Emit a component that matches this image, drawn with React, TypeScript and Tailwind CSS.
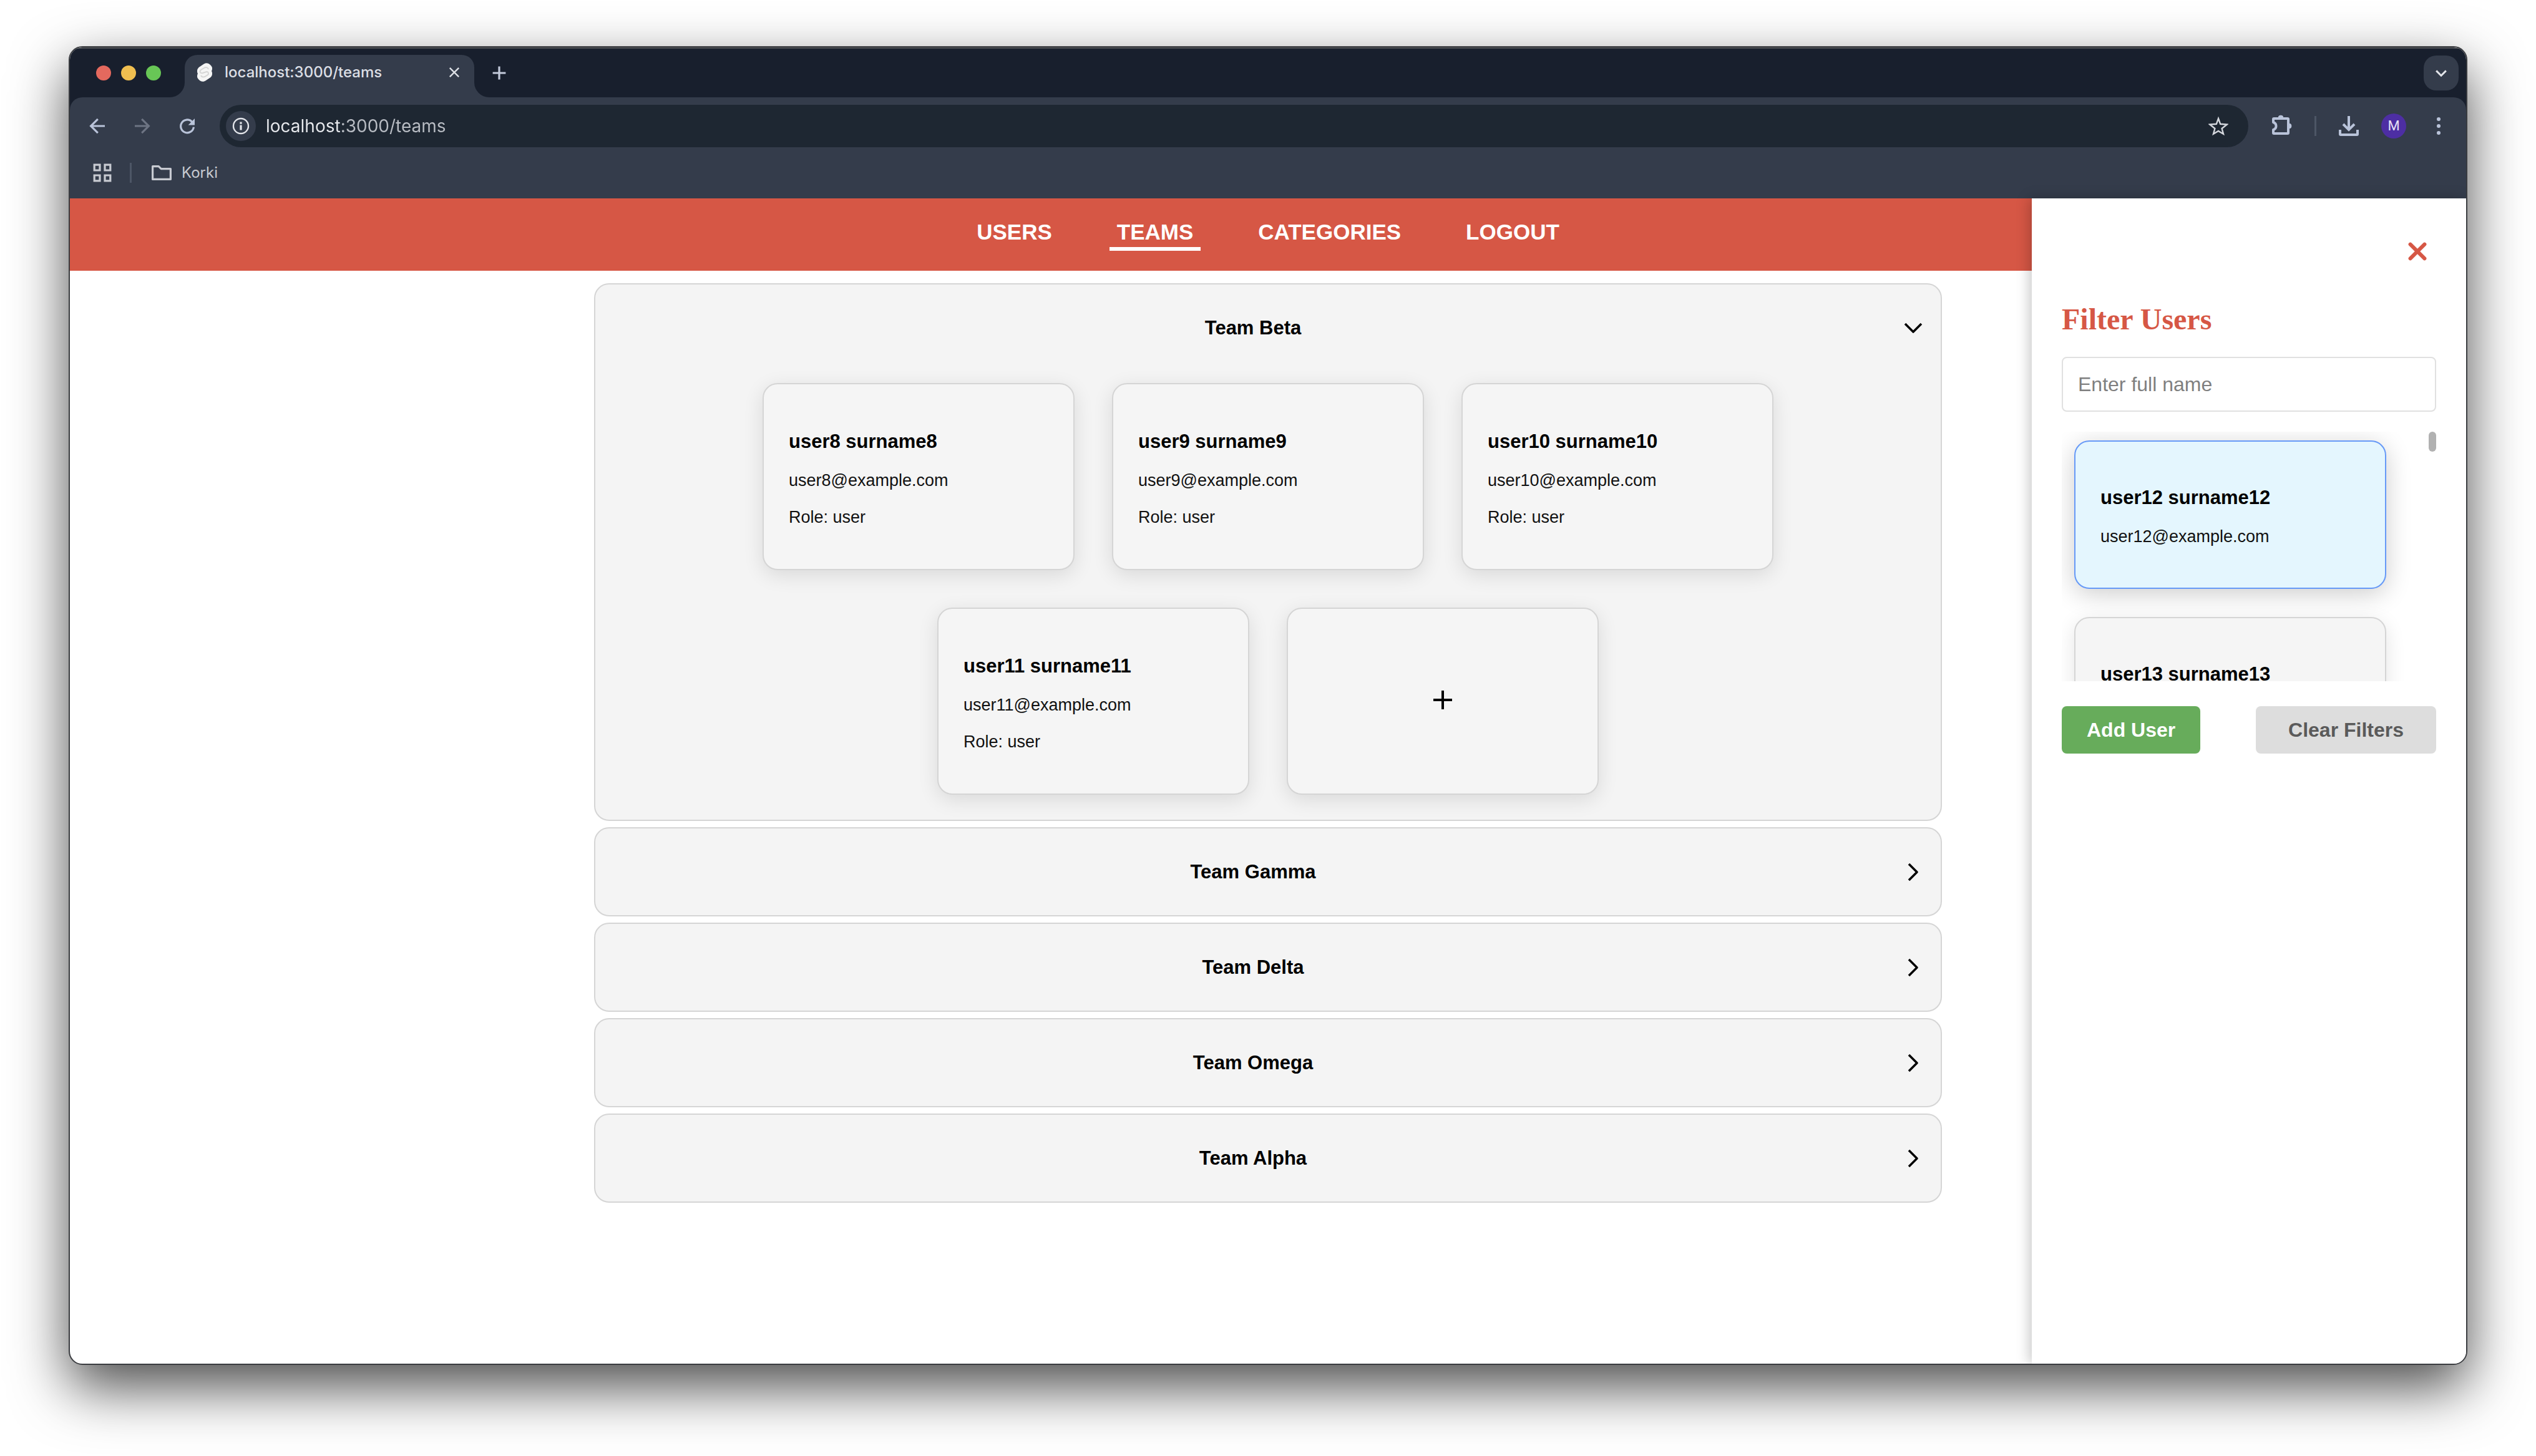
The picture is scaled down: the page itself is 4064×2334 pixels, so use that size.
import React from 'react';

type IconProps = { className?: string };

const Chevron = ({ open }: { open: boolean }) => (
  <svg className="size-12 shrink-0" viewBox="0 0 24 24" fill="none" stroke="currentColor" strokeWidth="1.8" strokeLinejoin="round" aria-hidden="true">
    {open ? <path d="m5.5 8.5 6.5 6.5 6.5-6.5" /> : <path d="m8.5 18.5 6.5-6.5-6.5-6.5" />}
  </svg>
);

const Stroke = ({ className, children }: IconProps & { children: React.ReactNode }) => (
  <svg className={className} viewBox="0 0 40 40" fill="none" stroke="currentColor" strokeWidth="3" aria-hidden="true">
    {children}
  </svg>
);

const SvelteMark = () => (
  <svg className="h-8 w-7 shrink-0" viewBox="0 0 28 32" aria-hidden="true">
    <path d="M24 5c-3-4-8-5-12-2L6 7c-2 1-4 4-4 6 0 2 0 4 1 5-1 2-1 3-1 5 0 1 1 3 2 4 3 4 8 5 12 2l6-4c2-1 4-4 4-6 0-2 0-4-1-5 1-2 1-3 1-5 0-1-1-3-2-4z" fill="#f5f5f5" />
    <path d="M20 11c-1-3-4-4-7-2l-5 3c-3 3-1 6 3 5l6-2c3 0 4 3 2 5l-5 3c-3 1-5 0-6-2" fill="none" stroke="#d6d6d6" strokeWidth="2" />
  </svg>
);

function TabStrip() {
  return (
    <div className="flex h-[78px] items-end bg-[#181f2d] pr-3 pl-[42px]">
      <div className="flex items-center gap-4 self-center" aria-hidden="true">
        <span className="size-6 rounded-full bg-[#e4695e]" />
        <span className="size-6 rounded-full bg-[#f0bf50]" />
        <span className="size-6 rounded-full bg-[#68c656]" />
      </div>
      <svg className="ml-[14px] h-6 w-6" viewBox="0 0 24 24" aria-hidden="true">
        <path d="M24 0v24H0A24 24 0 0 0 24 0z" fill="#343c4b" />
      </svg>
      <div className="flex h-[68px] w-[464px] items-center rounded-t-[20px] bg-[#343c4b] pr-5 pb-3 pl-[18px]">
        <SvelteMark />
        <span className="ml-[18px] flex-1 text-[24px] leading-8 font-medium text-[#dcdfe5]">localhost:3000/teams</span>
        <button type="button" aria-label="Close tab" className="text-[#dcdfe5]">
          <Stroke className="size-6"><path d="M8 8l24 24M32 8L8 32" strokeWidth="4" /></Stroke>
        </button>
      </div>
      <svg className="h-6 w-6" viewBox="0 0 24 24" aria-hidden="true">
        <path d="M0 0v24h24A24 24 0 0 1 0 0z" fill="#343c4b" />
      </svg>
      <button type="button" aria-label="New tab" className="self-center text-[#c3cadb]">
        <Stroke className="size-8"><path d="M20 7v26M7 20h26" strokeWidth="4" /></Stroke>
      </button>
      <button type="button" aria-label="Search tabs" className="ml-auto flex size-14 items-center justify-center self-center rounded-[20px] bg-[#343c4b] text-[#e3e5ea]">
        <Stroke className="size-6"><path d="M7 14l13 13 13-13" strokeWidth="5" /></Stroke>
      </button>
    </div>
  );
}

function Toolbar() {
  return (
    <div className="bg-[#181f2d]">
      <div className="flex h-[92px] items-center rounded-t-[20px] bg-[#343c4b] px-6 text-[#b9c3d9]">
        <button type="button" aria-label="Back" className="p-1">
          <Stroke className="size-8"><path d="M35 20H7M21 6L7 20l14 14" strokeWidth="4" /></Stroke>
        </button>
        <button type="button" aria-label="Forward" className="ml-8 p-1 text-[#6d7483]">
          <Stroke className="size-8"><path d="M5 20h28M19 6l14 14-14 14" strokeWidth="4" /></Stroke>
        </button>
        <button type="button" aria-label="Reload" className="ml-8 p-1">
          <Stroke className="size-8">
            <path d="M33 22a13 13 0 1 1-4-11l3 3" strokeWidth="4" />
            <path d="M35 5v13H22z" fill="currentColor" stroke="none" />
          </Stroke>
        </button>
        <div className="ml-8 flex h-[68px] flex-1 items-center rounded-full bg-[#1e2732] pr-8 pl-[10px]">
          <button type="button" aria-label="Site information" className="flex size-12 items-center justify-center rounded-full bg-[#343c4b] text-[#e3e5ea]">
            <Stroke className="size-8"><circle cx="20" cy="20" r="15" strokeWidth="3" /><path d="M20 18v10M20 12v4" strokeWidth="4" /></Stroke>
          </button>
          <input
            type="text"
            aria-label="Address"
            defaultValue="localhost:3000/teams"
            className="ml-4 h-9 min-w-0 flex-1 bg-[linear-gradient(90deg,#e8eaee_122px,#b9bdc4_122px)] bg-clip-text text-[28px] leading-9 text-transparent outline-none"
          />
          <button type="button" aria-label="Bookmark this page" className="text-[#d5d8de]">
            <Stroke className="size-8"><path d="M20 5l4 11 13 1-10 8 3 11-10-6-10 6 3-11-10-8 13-1z" strokeWidth="3" /></Stroke>
          </button>
        </div>
        <button type="button" aria-label="Extensions" className="ml-[34px]">
          <Stroke className="size-10">
            <path d="M7 8H29a1 1 0 0 1 1 1V31a1 1 0 0 1-1 1H7a1 1 0 0 1-1-1V26c6-2 6-10 0-12V9a1 1 0 0 1 1-1z" strokeWidth="4" strokeLinejoin="round" />
            <path d="M14 7a4 4 0 0 1 8 0zM31 16a4 4 0 0 1 0 8z" fill="currentColor" strokeWidth="1" />
          </Stroke>
        </button>
        <span className="ml-8 h-8 w-[3px] bg-[#4d5666]" />
        <button type="button" aria-label="Downloads" className="ml-8">
          <Stroke className="size-10"><path d="M20 4v22M11 17l9 9 9-9M6 26v7a1 1 0 0 0 1 1h26a1 1 0 0 0 1-1v-7" strokeWidth="4" /></Stroke>
        </button>
        <button type="button" aria-label="Profile" className="ml-8 flex size-10 items-center justify-center rounded-full bg-[#4d2ea3] font-['Roboto'] text-[22px] leading-6 text-[#e6e1f5]">M</button>
        <button type="button" aria-label="Menu" className="ml-8">
          <svg className="size-10" viewBox="0 0 40 40" fill="currentColor" aria-hidden="true"><circle cx="20" cy="9" r="3" /><circle cx="20" cy="20" r="3" /><circle cx="20" cy="31" r="3" /></svg>
        </button>
      </div>
      <div className="flex h-[70px] items-center bg-[#343c4b] pb-3 pl-9 text-[#c7cad1]">
        <button type="button" aria-label="Apps">
          <Stroke className="size-8"><path d="M4 4h11v11H4zM25 4h11v11H25zM4 25h11v11H4zM25 25h11v11H25z" strokeWidth="4" /></Stroke>
        </button>
        <span className="ml-7 h-8 w-[3px] bg-[#4d5666]" />
        <a href="#korki" className="ml-8 flex items-center gap-4 text-[24px] leading-8">
          <Stroke className="size-8"><path d="M2 7h12l5 5h19v21H2z" strokeWidth="4" strokeLinejoin="round" /></Stroke>
          Korki
        </a>
      </div>
    </div>
  );
}

const links = ['USERS', 'TEAMS', 'CATEGORIES', 'LOGOUT'];

function NavBar() {
  return (
    <nav className="flex h-[116px] items-center justify-center gap-20 bg-[#d65745] text-[35px] leading-[41px] font-bold text-white">
      {links.map((l) => (
        <a
          key={l}
          href={`#${l.toLowerCase()}`}
          aria-current={l === 'TEAMS' ? 'page' : undefined}
          className="border-b-[6px] border-transparent px-3 pb-1 aria-[current=page]:border-white"
        >
          {l}
        </a>
      ))}
    </nav>
  );
}

function UserCard({ n, email = true, role, selected }: { n: number; email?: boolean; role?: string; selected?: boolean }) {
  return (
    <button
      type="button"
      aria-pressed={selected}
      className={
        'flex w-[500px] shrink-0 flex-col items-start rounded-3xl border-2 px-10 text-left ' +
        (role ? 'pt-[74px] pb-[67px] ' : 'pt-[72px] pb-[66px] ') +
        (selected
          ? 'border-[#6699f7] bg-[#e4f6fe] shadow-[0_8px_40px_rgba(0,0,0,0.2)]'
          : 'border-[#d5d5d5] bg-[#f5f5f5] shadow-[0_8px_32px_rgba(0,0,0,0.11)]')
      }
    >
      <h3 className="text-[31px] leading-9 font-bold">{`user${n} surname${n}`}</h3>
      {email && <p className="mt-7 text-[27px] leading-8 text-[#111111]">{`user${n}@example.com`}</p>}
      {role && <p className="mt-[27px] text-[27px] leading-8 text-[#111111]">Role: {role}</p>}
    </button>
  );
}

function TeamPanel({ name, users }: { name: string; users?: number[] }) {
  return (
    <section className="rounded-3xl border-2 border-[#d5d5d5] bg-[#f4f4f4]">
      <button type="button" aria-expanded={!!users} className="flex h-[139px] w-full items-center px-5">
        <span className="flex-1 text-[31px] leading-9 font-bold">{name}</span>
        <Chevron open={!!users} />
      </button>
      {users && (
        <div className="mx-auto flex w-[1620px] max-w-full flex-wrap justify-center gap-[60px] pt-[19px] pb-10">
          {users.map((n) => (
            <UserCard key={n} n={n} role="user" />
          ))}
          <button type="button" aria-label={`Add user to ${name}`} className="flex w-[500px] items-center justify-center rounded-3xl border-2 border-[#d5d5d5] bg-[#f5f5f5] shadow-[0_8px_32px_rgba(0,0,0,0.11)]">
            <svg className="size-12" viewBox="0 0 48 48" stroke="currentColor" strokeWidth="4" aria-hidden="true">
              <path d="M24 7v30M9 22h30" />
            </svg>
          </button>
        </div>
      )}
    </section>
  );
}

function FilterDrawer() {
  return (
    <aside className="absolute inset-y-0 right-0 flex w-[696px] flex-col bg-white px-12 pt-[61px] shadow-[-4px_0_20px_rgba(0,0,0,0.22)]">
      <button type="button" aria-label="Close" className="mr-[6px] self-end text-[#d65745]">
        <Stroke className="size-12"><path d="M10.5 10.5l19 19M29.5 10.5l-19 19" strokeWidth="5" strokeLinecap="round" /></Stroke>
      </button>
      <h2 className="mt-[57px] font-['Liberation_Serif',serif] text-[48px] leading-[56px] font-bold text-[#d65745]">Filter Users</h2>
      <input
        type="text"
        aria-label="Full name"
        placeholder="Enter full name"
        className="mt-8 h-[88px] w-full rounded-lg border-2 border-[#e0e0e0] bg-white px-6 text-[32px] leading-9 outline-none placeholder:text-[#7f7f7f]"
      />
      <div className="mt-8 flex h-[400px] justify-between overflow-hidden">
        <div className="flex flex-col gap-[45px] pt-[14px] pl-5">
          <UserCard n={12} selected />
          <UserCard n={13} email={false} />
        </div>
        <div className="h-8 w-3 rounded-full bg-[#b1b1b1]" />
      </div>
      <div className="mt-10 flex items-start justify-between text-[32px] leading-9 font-bold">
        <button type="button" className="rounded-lg bg-[#67ac5b] px-10 py-5 text-white">Add User</button>
        <button type="button" className="rounded-lg bg-[#dddddd] px-[52px] py-5 text-[#5a5a5a]">Clear Filters</button>
      </div>
    </aside>
  );
}

export default function App() {
  return (
    <div className="flex min-h-screen flex-col overflow-hidden bg-white px-[110px] pt-[74px] pb-[146px] font-['Inter',sans-serif]">
      <div className="flex flex-1 flex-col overflow-hidden rounded-[22px] border-2 border-[#3a3c40] bg-white shadow-[0_36px_90px_rgba(0,0,0,0.7)]">
        <div className="border-t-2 border-[#4a4d52]">
          <TabStrip />
          <Toolbar />
        </div>
        <div className="relative flex-1 font-['Liberation_Sans',Arial,sans-serif] text-black">
          <NavBar />
          <main className="mx-auto mt-5 flex w-[2160px] max-w-full flex-col gap-[10px]">
            <TeamPanel name="Team Beta" users={[8, 9, 10, 11]} />
            <TeamPanel name="Team Gamma" />
            <TeamPanel name="Team Delta" />
            <TeamPanel name="Team Omega" />
            <TeamPanel name="Team Alpha" />
          </main>
          <FilterDrawer />
        </div>
      </div>
    </div>
  );
}
